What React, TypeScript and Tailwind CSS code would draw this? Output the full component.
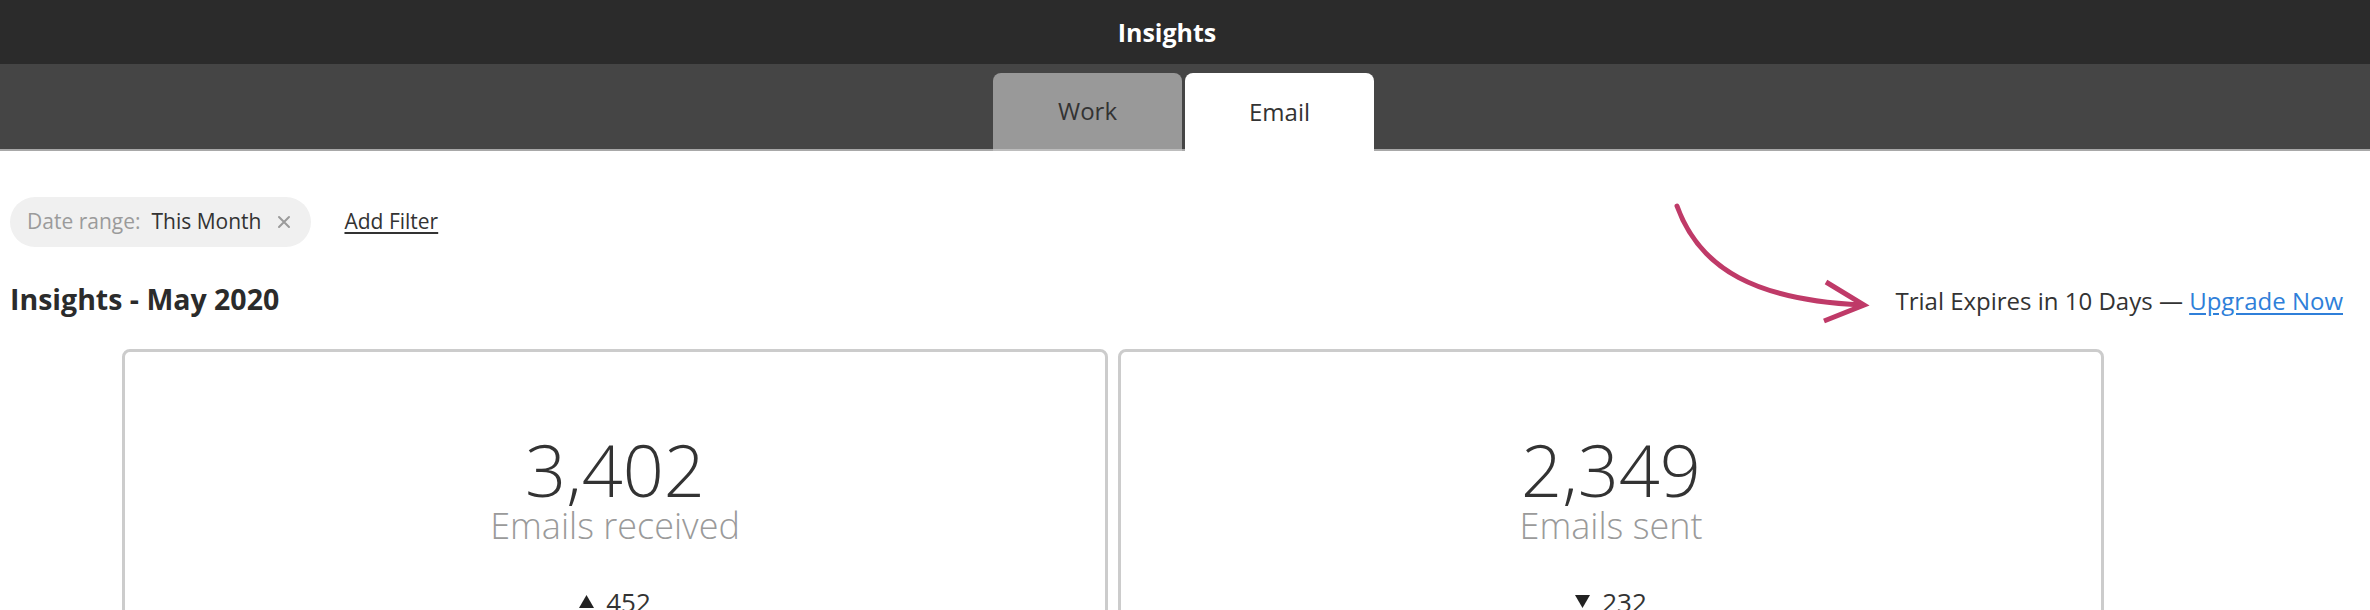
import React from "react";

function Triangle({ up }: { up: boolean }) {
  return (
    <svg width="15" height="13" viewBox="0 0 15 13" className="mr-[12px]">
      {up ? (
        <polygon points="7.5,0 15,13 0,13" fill="#222" />
      ) : (
        <polygon points="0,0 15,0 7.5,13" fill="#222" />
      )}
    </svg>
  );
}

function StatCard({ value, label, delta, up }: { value: string; label: string; delta: string; up: boolean }) {
  return (
    <div className="h-[330px] rounded-[8px] border-[3px] border-[#cccccc] bg-white flex flex-col items-center pt-[81px]">
      <div className="text-[72px] leading-none font-light text-[#333333]">{value}</div>
      <div className="mt-[3px] text-[36px] leading-none font-light text-[#9a9a9a]">{label}</div>
      <div className="mt-[45px] flex items-center text-[26px] leading-none text-[#333333]">
        <Triangle up={up} />
        <span>{delta}</span>
      </div>
    </div>
  );
}

export default function App() {
  return (
    <div className="relative w-[2370px] min-h-[610px] bg-white overflow-hidden" style={{ fontFamily: '"Open Sans", "Liberation Sans", sans-serif' }}>
      {/* Header */}
      <div className="h-[64px] bg-[#2b2b2b] flex items-center justify-center">
        <span className="mr-[36px] text-white font-bold text-[25px] leading-none">Insights</span>
      </div>
      {/* Tabs */}
      <div className="h-[87px] bg-[#454545] border-b-2 border-[#a8a8a8] flex items-end justify-center gap-[3px] pr-[3px]">
        <div className="w-[189px] h-[78px] -mb-[2px] rounded-t-[8px] bg-[#999999] border-b-2 border-[#bdbdbd] flex items-center justify-center text-[24px] text-[#333333]">
          Work
        </div>
        <div className="w-[189px] h-[78px] -mb-[2px] rounded-t-[8px] bg-white flex items-center justify-center text-[24px] text-[#333333]">
          Email
        </div>
      </div>

      {/* Content */}
      <div className="px-[10px]">
        <div className="mt-[46px] flex items-center">
          <div className="h-[50px] rounded-full bg-[#f0f0f0] flex items-center pl-[17px] pr-[20px] text-[21px]">
            <span className="text-[#9b9b9b]">Date range:</span>
            <span className="ml-[11px] text-[#333333]">This Month</span>
            <svg width="14" height="14" viewBox="0 0 14 14" className="ml-[16px]">
              <path d="M2 2 L12 12 M12 2 L2 12" stroke="#9b9b9b" strokeWidth="2" strokeLinecap="round" />
            </svg>
          </div>
          <a className="ml-[33px] text-[21px] text-[#333333] underline underline-offset-[3px]">Add Filter</a>
        </div>

        <div className="mt-[38px] flex items-baseline justify-between">
          <h1 className="text-[28.5px] leading-none font-bold text-[#2b2b2b]">Insights - May 2020</h1>
          <div className="mr-[17px] text-[24px] leading-none text-[#333333]">
            Trial Expires in 10 Days —{" "}
            <a className="text-[#2f7fd9] underline underline-offset-[3px]">Upgrade Now</a>
          </div>
        </div>

        <div className="mt-[35px] ml-[112px] w-[1982px] grid grid-cols-2 gap-[10px]">
          <StatCard value="3,402" label="Emails received" delta="452" up={true} />
          <StatCard value="2,349" label="Emails sent" delta="232" up={false} />
        </div>
      </div>

      {/* Annotation arrow */}
      <svg className="absolute left-[1660px] top-[195px]" width="230" height="140" viewBox="1660 195 230 140" fill="none">
        <path d="M1677 206 C1700 270 1757 300 1862 305" stroke="#bf3a68" strokeWidth="5" strokeLinecap="round" fill="none" />
        <path d="M1826 282 L1864 305 L1824 321" stroke="#bf3a68" strokeWidth="5" strokeLinecap="butt" strokeLinejoin="miter" fill="none" />
      </svg>
    </div>
  );
}
